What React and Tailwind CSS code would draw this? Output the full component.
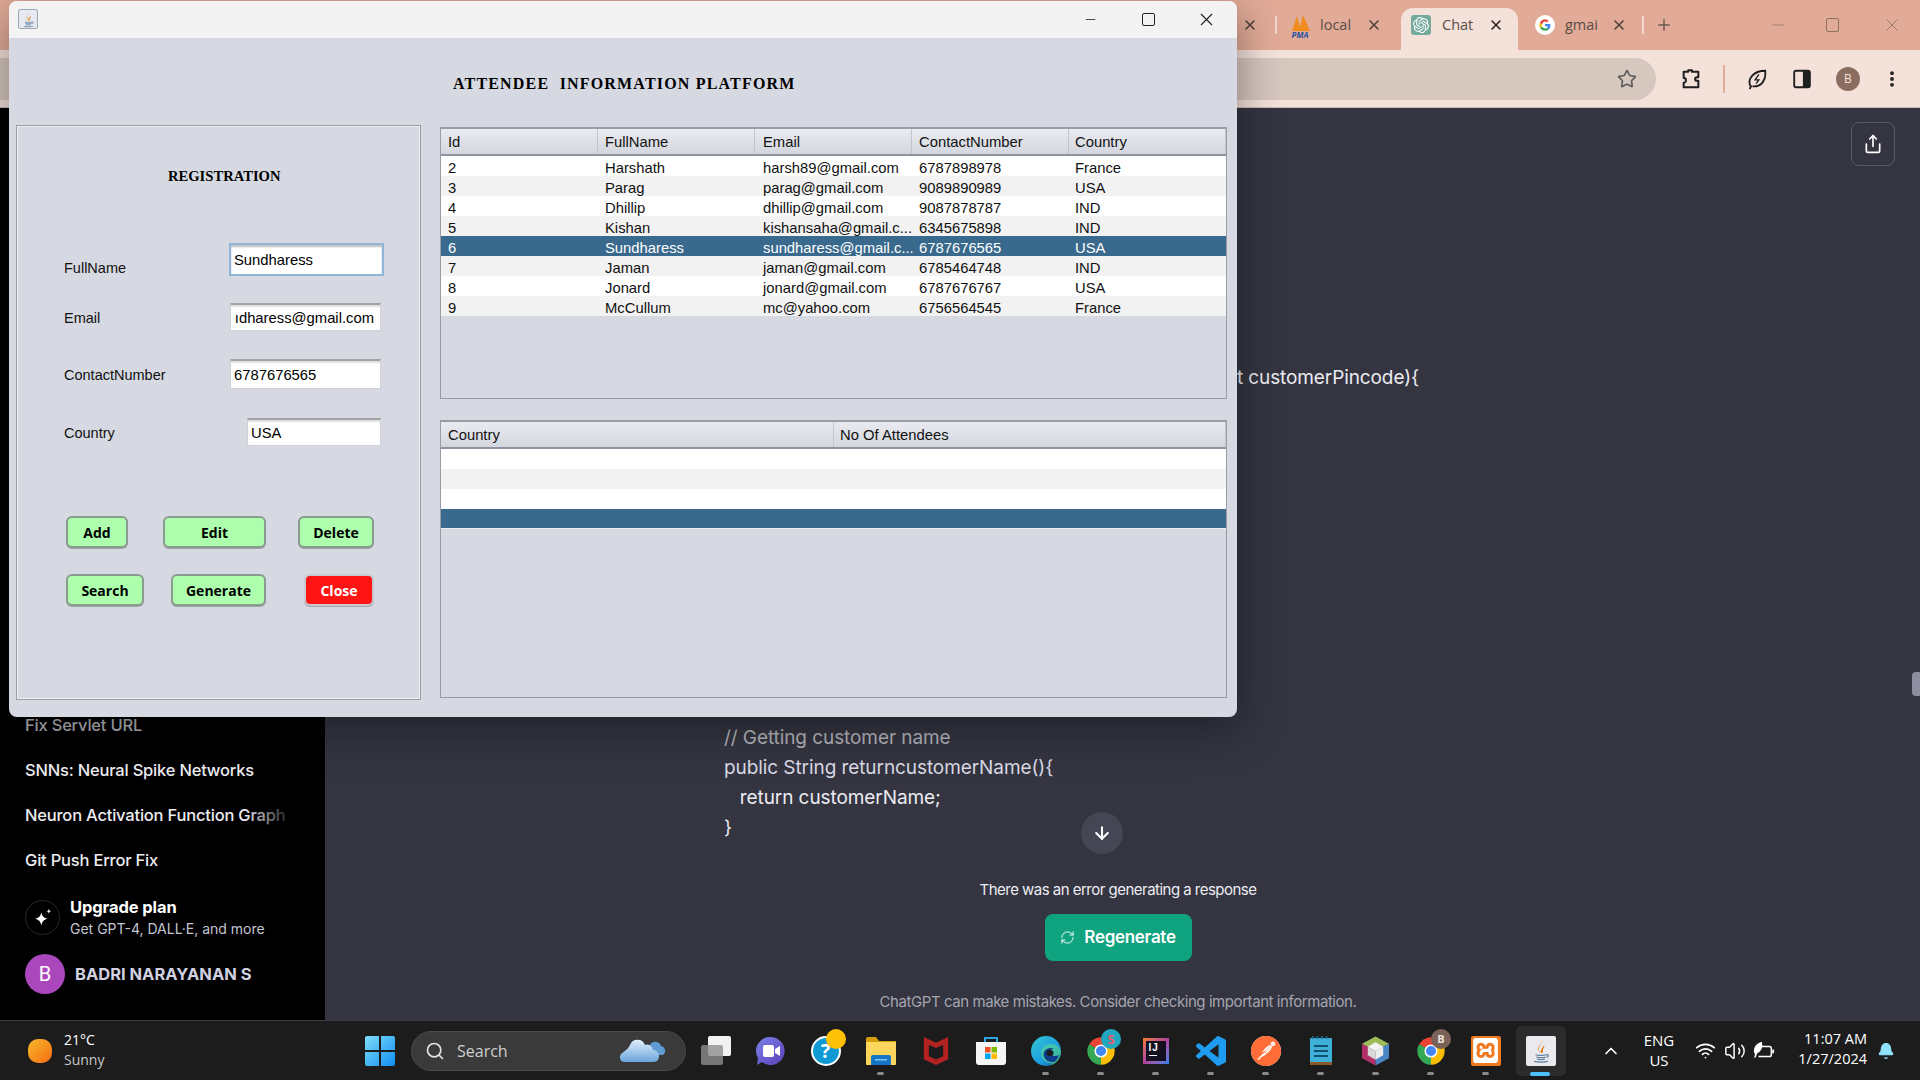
import React from "react";
import { Search, Star, EllipsisVertical, Share, ArrowDown, RefreshCw, X, Plus, Minus, Wifi, Volume2, ChevronUp, Bell } from "lucide-react";
import { SiOpenai, SiMcafee, SiXampp, SiPostman } from "react-icons/si";

const JSANS = { fontFamily: '"Liberation Sans", Arial, sans-serif' };
const UI = { fontFamily: 'Inter, "Noto Sans", sans-serif' };
const WIN = { fontFamily: '"Open Sans", "Noto Sans", sans-serif' };

function JavaGlyph({ className }) {
  return (
    <svg viewBox="0 0 24 24" className={className}>
      <path d="M13 2c1 3-3 5-3 8 0 1.500.8 2.600 1.600 3.400-.3-2 3.400-4 2.600-6.600 1.500 2-2 5-.8 7 0 0-3.700-.3-3.900-3.600C9.300 7 13.500 5.500 13 2z" fill="#e76f00" />
      <path d="M15 8c-2 1.500-2.500 3-1.500 5" fill="none" stroke="#e76f00" strokeWidth="1" />
      <path d="M7 15.500c2 .8 8 .8 10 0M7.500 17.500c2 .7 7 .7 9 0M8.500 19.500c2 .5 5 .5 7 0M5.500 21.500c3 1 10 1 13 0M17 15.500c2-.5 2.500 1.500.2 2.500" fill="none" stroke="#5d7d9c" strokeWidth="1.100" />
    </svg>
  );
}

function ChromeIcon() {
  return (
    <svg viewBox="0 0 48 48" className="w-[30px] h-[30px]">
      <path d="M24 24 L5 13 A22 22 0 0 1 43 13 Z" fill="#ea4335" />
      <path d="M24 24 L43 13 A22 22 0 0 1 24 46 Z" fill="#fbbc04" />
      <path d="M24 24 L24 46 A22 22 0 0 1 5 13 Z" fill="#34a853" />
      <circle cx="24" cy="24" r="10.500" fill="#fff" />
      <circle cx="24" cy="24" r="8" fill="#4285f4" />
    </svg>
  );
}

function GoogleG() {
  return (
    <svg viewBox="0 0 48 48" className="w-[20px] h-[20px]">
      <circle cx="24" cy="24" r="24" fill="#fff" />
      <path d="M37 24.500c0-1-.1-1.800-.3-2.700H24v5h7.300c-.4 2-1.500 3.500-3 4.500l4.700 3.600c2.700-2.500 4-6.200 4-10.400z" fill="#4285f4" />
      <path d="M24 38c3.700 0 6.800-1.200 9-3.300l-4.700-3.600c-1.200.8-2.700 1.300-4.300 1.300-3.300 0-6.200-2.200-7.200-5.300l-4.800 3.700C14.300 35.200 18.800 38 24 38z" fill="#34a853" />
      <path d="M16.800 27.100c-.5-1.400-.5-3 0-4.300l-4.800-3.700c-2 3.900-2 7.800 0 11.700z" fill="#fbbc04" />
      <path d="M24 15.600c1.900 0 3.600.7 5 2l3.700-3.700C30.400 11.700 27.400 10 24 10c-5.200 0-9.700 2.800-12 9.100l4.800 3.700c1-3.100 3.900-7.200 7.200-7.200z" fill="#ea4335" />
    </svg>
  );
}

function TaskItem({ children, dot, badge }) {
  return (
    <div className="relative w-[55px] h-[60px] flex items-center justify-center shrink-0">
      {children}
      {badge}
      {dot && <span className="absolute bottom-[6px] left-[24px] w-[7px] h-[3px] rounded-full bg-[#8a8a8a]" />}
    </div>
  );
}

function Cell({ children, pad }) {
  return <div className={`whitespace-nowrap ${pad}`}>{children}</div>;
}

const rows = [
  ["2", "Harshath", "harsh89@gmail.com", "6787898978", "France"],
  ["3", "Parag", "parag@gmail.com", "9089890989", "USA"],
  ["4", "Dhillip", "dhillip@gmail.com", "9087878787", "IND"],
  ["5", "Kishan", "kishansaha@gmail.c...", "6345675898", "IND"],
  ["6", "Sundharess", "sundharess@gmail.c...", "6787676565", "USA"],
  ["7", "Jaman", "jaman@gmail.com", "6785464748", "IND"],
  ["8", "Jonard", "jonard@gmail.com", "6787676767", "USA"],
  ["9", "McCullum", "mc@yahoo.com", "6756564545", "France"],
];
const pads = ["pl-[7px]", "pl-[7px]", "pl-[8px]", "pl-[7px]", "pl-[6px]"];

const hdr = "h-[25px] flex items-center pt-[2px] bg-gradient-to-b from-[#e9ebf0] via-[#dfe1e7] to-[#d3d6de] border-r border-[#c3c6ce]";

function Field({ w, focus, end, children, h }) {
  return (
    <div className={`${w} ${h} bg-white flex items-center whitespace-nowrap text-[14.800px] text-black pt-[1px] ${end ? "justify-end pr-[6px]" : "pl-[3px]"} ${focus ? "border-2 border-[#8fb5d9] shadow-[inset_0_2px_2px_rgba(0,0,0,0.25)]" : "border border-[#cfd1d6] border-t-2 border-t-[#a3a3a3] shadow-[inset_0_2px_1px_rgba(0,0,0,0.12)]"}`}>
      {children}
    </div>
  );
}

function JBtn({ w, ml, red, children }) {
  return (
    <div
      style={WIN}
      className={`${w} ${ml} h-[32px] rounded-[6px] flex items-center justify-center text-[14px] font-bold border-2 ${red ? "bg-[#ff1414] text-white border-[#c8c8d0]" : "bg-[#adffad] text-black border-[#8a9c90]"} shadow-[0_1px_0_rgba(0,0,0,0.25)]`}
    >
      {children}
    </div>
  );
}

function JavaWindow() {
  return (
    <div className="absolute left-[9px] top-[1px] w-[1228px] h-[716px] rounded-[8px] overflow-hidden bg-[#d6d9e2] shadow-[0_10px_45px_rgba(0,0,0,0.4)] flex flex-col" style={JSANS}>
      <div className="h-[37px] bg-[#f3f3f3] flex items-center shrink-0 pb-[1px]">
        <div className="ml-[9px] w-[20px] h-[20px] rounded-[2px] border border-[#9aa7b5] bg-[#e6eaf0] flex items-center justify-center">
          <JavaGlyph className="w-[17px] h-[17px]" />
        </div>
        <Minus className="ml-[1045px] w-[15px] h-[15px] text-[#222]" strokeWidth={1.3} />
        <div className="ml-[44px] w-[13px] h-[13px] border-[1.5px] border-[#222] rounded-[2px]" />
        <X className="ml-[41px] w-[21px] h-[21px] text-[#222]" strokeWidth={1.3} />
      </div>
      <div className="h-[87px] shrink-0 flex items-start pl-[444px] pt-[37px]">
        <div className="text-[16px] leading-[18px] font-bold text-black tracking-[1.180px] whitespace-pre" style={{ fontFamily: '"Liberation Serif", serif' }}>ATTENDEE  INFORMATION PLATFORM</div>
      </div>
      <div className="flex items-start pl-[7px]">
        <div className="w-[405px] h-[575px] border border-[#9b9da6] shadow-[inset_0_0_0_1px_#eceef2] pl-[47px] shrink-0">
          <div className="mt-[41px] ml-[104px] text-[14.600px] leading-[18px] font-bold text-black" style={{ fontFamily: '"Liberation Serif", serif' }}>REGISTRATION</div>
          <div className="mt-[58px] flex items-start h-[33px] text-[14.500px] ">
            <div className="pt-[16px] w-[165px] leading-[18px] text-[#111]">FullName</div>
            <Field w="w-[155px]" h="h-[33px]" focus>Sundharess</Field>
          </div>
          <div className="mt-[27px] flex items-start h-[28px] text-[14.500px]">
            <div className="pt-[6px] w-[166px] leading-[18px] text-[#111]">Email</div>
            <Field w="w-[151px]" h="h-[28px]" end>ıdharess@gmail.com</Field>
          </div>
          <div className="mt-[28px] flex items-start h-[30px] text-[14.500px]">
            <div className="pt-[7px] w-[166px] leading-[18px] text-[#111]">ContactNumber</div>
            <Field w="w-[151px]" h="h-[30px]">6787676565</Field>
          </div>
          <div className="mt-[29px] flex items-start h-[28px] text-[14.500px]">
            <div className="pt-[6px] w-[183px] leading-[18px] text-[#111]">Country</div>
            <Field w="w-[134px]" h="h-[28px]">USA</Field>
          </div>
          <div className="mt-[70px] flex ml-[2px]">
            <JBtn w="w-[62px]">Add</JBtn>
            <JBtn w="w-[103px]" ml="ml-[35px]">Edit</JBtn>
            <JBtn w="w-[76px]" ml="ml-[32px]">Delete</JBtn>
          </div>
          <div className="mt-[26px] flex ml-[2px]">
            <JBtn w="w-[78px]">Search</JBtn>
            <JBtn w="w-[95px]" ml="ml-[27px]">Generate</JBtn>
            <JBtn w="w-[70px]" ml="ml-[38px]" red>Close</JBtn>
          </div>
        </div>
        <div className="ml-[19px] w-[787px] pt-[2px] shrink-0 text-[14.800px] text-[#111]">
          <div className="h-[272px] border border-[#9b9da6] border-t-2 overflow-hidden">
            <div className="grid grid-cols-[157px_157px_157px_157px_157px] border-b-2 border-[#8f939f]">
              {["Id", "FullName", "Email", "ContactNumber", "Country"].map((t, i) => (
                <div key={t} className={`${hdr} ${pads[i]}`}>{t}</div>
              ))}
            </div>
            {rows.map((r, i) => (
              <div key={r[0]} className={`grid grid-cols-[157px_157px_157px_157px_157px] h-[20px] leading-[24px] ${r[0] === "6" ? "bg-[#39698c] text-white" : i % 2 === 0 ? "bg-white" : "bg-[#f2f2f2]"}`}>
                {r.map((c, j) => (
                  <Cell key={j} pad={pads[j]}>{c}</Cell>
                ))}
              </div>
            ))}
          </div>
          <div className="mt-[21px] h-[278px] border border-[#9b9da6] border-t-2 overflow-hidden">
            <div className="grid grid-cols-[393px_392px] border-b-2 border-[#8f939f]">
              <div className={`${hdr} pl-[7px]`}>Country</div>
              <div className={`${hdr} pl-[6px]`}>No Of Attendees</div>
            </div>
            <div className="h-[20px] bg-white" />
            <div className="h-[20px] bg-[#f2f2f2]" />
            <div className="h-[20px] bg-white" />
            <div className="h-[20px] bg-[#39698c] border-b border-[#eceef2]" />
          </div>
        </div>
      </div>
    </div>
  );
}

function Browser() {
  return (
    <div className="flex flex-col flex-1 min-h-0" style={UI}>
      <div className="h-[50px] bg-[#e2ab98] flex items-center shrink-0 text-[#5a4c47]" style={WIN}>
        <X className="ml-[1242px] w-[16px] h-[16px] text-[#50423d]" strokeWidth={2.4} />
        <div className="ml-[17px] w-[2px] h-[18px] bg-[#f1d9cf]" />
        <div className="ml-[12px] w-[22px] h-[28px] flex flex-col items-center justify-end">
          <svg viewBox="0 0 22 16" className="w-[22px] h-[16px]"><path d="M3 16 L8 1 L11 12 L14 0 L21 16 Z" fill="#f08d1e" /></svg>
          <span className="text-[8px] leading-[8px] font-bold italic text-[#2a4f9e]">PMA</span>
        </div>
        <div className="ml-[9px] w-[33px] text-[14.500px] whitespace-nowrap">local</div>
        <X className="ml-[13px] w-[16px] h-[16px] text-[#50423d]" strokeWidth={2.4} />
        <div className="ml-[19px] w-[117px] h-[42px] self-end bg-[#f4e1da] rounded-t-[12px] flex items-center pb-[8px]">
          <div className="ml-[10px] w-[20px] h-[20px] rounded-[3px] bg-[#74aa9c] flex items-center justify-center"><SiOpenai className="w-[16px] h-[16px] text-white" /></div>
          <div className="ml-[11px] w-[35px] text-[14.500px] whitespace-nowrap">Chat</div>
          <X className="ml-[11px] w-[16px] h-[16px] text-[#2c2422]" strokeWidth={2.4} />
        </div>
        <div className="ml-[17px]"><GoogleG /></div>
        <div className="ml-[10px] w-[33px] text-[14.500px] whitespace-nowrap">gmai</div>
        <X className="ml-[13px] w-[16px] h-[16px] text-[#50423d]" strokeWidth={2.4} />
        <div className="ml-[15px] w-[2px] h-[18px] bg-[#f1d9cf]" />
        <Plus className="ml-[11px] w-[18px] h-[18px] text-[#6a5a54]" strokeWidth={2} />
        <Minus className="ml-[96px] w-[18px] h-[18px] text-[#8c7066]" strokeWidth={1} />
        <div className="ml-[39px] w-[13px] h-[14px] border border-[#8c7066] rounded-[2px]" />
        <X className="ml-[43px] w-[20px] h-[20px] text-[#8c7066]" strokeWidth={1} />
      </div>
      <div className="h-[58px] bg-[#f4e1da] flex items-center shrink-0 border-b border-[#cdb9b1]">
        <div className="w-[1656px] h-[42px] rounded-r-full bg-[#d6c7bf] flex items-center justify-end pr-[19px] shrink-0">
          <Star className="w-[20px] h-[20px] text-[#5f5f5f]" strokeWidth={2} />
        </div>
        <svg viewBox="0 0 24 24" className="ml-[24px] w-[22px] h-[22px]" fill="none" stroke="#1f1f1f" strokeWidth="2.200"><path d="M4 4h5V2.500h4V4h7v6h-1.500a2 2 0 0 0 0 4H20v7H4v-5a2.500 2.500 0 0 0 0-5z" strokeLinejoin="round" /></svg>
        <div className="ml-[21px] w-[2px] h-[28px] bg-[#e2ab98]" />
        <svg viewBox="0 0 24 24" className="ml-[21px] w-[22px] h-[22px]" fill="none" stroke="#1f1f1f" strokeWidth="2"><path d="M5 20C1 12 8 3 21 3c1 10-4 18-14 17M4 23l2-4" /><path d="M14 7l-4 6h4l-3 4" strokeWidth="1.500" /></svg>
        <svg viewBox="0 0 24 24" className="ml-[23px] w-[22px] h-[22px]"><rect x="3.500" y="3" width="17" height="18" rx="2" fill="none" stroke="#1f1f1f" strokeWidth="2" /><rect x="13" y="3" width="8" height="18" rx="1" fill="#1f1f1f" /></svg>
        <div className="ml-[23px] w-[24px] h-[24px] rounded-full bg-[#8a6d60] text-[#f4e1da] text-[12px] flex items-center justify-center" style={WIN}>B</div>
        <EllipsisVertical className="ml-[22px] w-[20px] h-[20px] text-[#1f1f1f]" strokeWidth={2.6} />
      </div>
      <div className="flex flex-1 min-h-0">
        <aside className="w-[325px] bg-black flex flex-col justify-end pb-[26px] pl-[25px] shrink-0 text-[#ececf1] relative">
          {["Fix Servlet URL", "SNNs: Neural Spike Networks", "Neuron Activation Function Graph", "Git Push Error Fix"].map((t, i) => (
            <div key={t} className={`h-[45px] flex items-center text-[16.500px] font-medium tracking-[-0.2px] whitespace-nowrap w-[265px] ${i === 0 ? "text-[#b5b5bb]" : ""}`}>{t}</div>
          ))}
          <div className="absolute left-[245px] top-[690px] w-[50px] h-[30px] bg-gradient-to-r from-transparent to-black" />
          <div className="mt-[17px] h-[35px] flex items-center">
            <div className="w-[35px] h-[35px] rounded-full border border-[#2a2a2a] flex items-center justify-center">
              <svg viewBox="0 0 24 24" className="w-[20px] h-[20px]" fill="#fff"><path d="M10 5c1 5 3 7 8 8-5 1-7 3-8 8-1-5-3-7-8-8 5-1 7-3 8-8z" /><path d="M19 1c.4 2 1 2.600 3 3-2 .4-2.600 1-3 3-.4-2-1-2.600-3-3 2-.4 2.600-1 3-3z" /></svg>
            </div>
            <div className="ml-[10px]">
              <div className="text-[16.500px] leading-[20px] font-bold text-white tracking-[-0.1px]">Upgrade plan</div>
              <div className="text-[14px] leading-[20px] mt-[2px] text-[#c5c5d2]">Get GPT-4, DALL·E, and more</div>
            </div>
          </div>
          <div className="mt-[19px] h-[40px] flex items-center">
            <div className="w-[40px] h-[40px] rounded-full bg-[#ab47bc] text-white flex items-center justify-center text-[20px]" style={{ fontFamily: "Roboto, sans-serif" }}>B</div>
            <div className="ml-[10px] text-[16.500px] font-bold text-[#d1d1e0] whitespace-nowrap">BADRI NARAYANAN S</div>
          </div>
        </aside>
        <main className="flex-1 bg-[#343541] relative flex flex-col text-[#d1d5db]">
          <div className="flex justify-end pt-[14px] pr-[25px]">
            <div className="w-[44px] h-[44px] rounded-[8px] border border-[#565869] flex items-center justify-center">
              <Share className="w-[20px] h-[20px] text-white" strokeWidth={2} />
            </div>
          </div>
          <div className="mt-[197px] ml-[400px] w-[694px] flex justify-end whitespace-nowrap text-[19px] leading-[30px] text-[#ececf1] tracking-[-0.1px]">
            <span>public Customer(String customerName, int customerId, int customerPincode){"{"}</span>
          </div>
          <div className="mt-[330px] ml-[399px] text-[19px] leading-[30px] tracking-[-0.08px] whitespace-pre">
            <div className="text-[#b4b5bd]">// Getting customer name</div>
            <div className="text-[#d9d9e3]">public String returncustomerName(){"{"}</div>
            <div className="text-[#ececf1]">{"   "}return customerName;</div>
            <div className="text-[#ececf1]">{"}"}</div>
          </div>
          <div className="absolute left-[756px] top-[704px] w-[42px] h-[42px] rounded-full bg-[#444654] flex items-center justify-center">
            <ArrowDown className="w-[20px] h-[20px] text-white" strokeWidth={2.5} />
          </div>
          <div className="w-[1586px] flex flex-col items-center">
            <div className="mt-[37px] h-[20px] text-[15px] leading-[20px] text-[#ececf1] tracking-[-0.52px]">There was an error generating a response</div>
            <div className="mt-[14px] w-[147px] h-[47px] rounded-[8px] bg-[#10a37f] flex items-center justify-center text-white font-semibold text-[17px] tracking-[-0.3px]">
              <RefreshCw className="w-[15px] h-[15px] mr-[9px]" strokeWidth={1.5} />Regenerate
            </div>
            <div className="mt-[31px] h-[20px] text-[15px] leading-[20px] text-[#a4a5af] tracking-[-0.43px]">ChatGPT can make mistakes. Consider checking important information.</div>
          </div>
          <div className="absolute right-[0px] top-[564px] w-[8px] h-[24px] rounded-l-[4px] bg-[#8e8ea0]" />
        </main>
      </div>
    </div>
  );
}

function Taskbar() {
  return (
    <div className="h-[60px] bg-[#1c1c1c] border-t border-[#3a3a3a] flex items-center shrink-0 text-white" style={WIN}>
      <div className="w-[350px] flex items-center pl-[28px] shrink-0">
        <div className="w-[24px] h-[24px] rounded-[10px] bg-gradient-to-br from-[#f6b72c] to-[#f26b10]" />
        <div className="ml-[12px] pb-[2px]">
          <div className="text-[14px] leading-[20px]">21°C</div>
          <div className="text-[14px] leading-[20px] text-[#c9c9c9]">Sunny</div>
        </div>
      </div>
      <svg viewBox="0 0 30 30" className="ml-[15px] w-[30px] h-[30px] shrink-0">
        <defs><linearGradient id="w" x1="0" y1="0" x2="1" y2="1"><stop offset="0" stopColor="#7fdcfb" /><stop offset="1" stopColor="#0f8ff0" /></linearGradient></defs>
        <path d="M0 2a2 2 0 0 1 2-2h12v14H0zM16 0h12a2 2 0 0 1 2 2v12H16zM0 16h14v14H2a2 2 0 0 1-2-2zM16 16h14v12a2 2 0 0 1-2 2H16z" fill="url(#w)" />
      </svg>
      <div className="ml-[16px] w-[275px] h-[40px] rounded-full bg-[#3a3a3a] border border-[#4a4a4a] flex items-center shrink-0">
        <Search className="ml-[13px] w-[20px] h-[20px] text-[#e2e2e2]" strokeWidth={2} />
        <span className="ml-[12px] text-[16px] text-[#cfcfcf]">Search</span>
        <svg viewBox="0 0 46 24" className="ml-[112px] w-[46px] h-[24px]">
          <defs><linearGradient id="c" x1="0" y1="0" x2="0" y2="1"><stop offset="0" stopColor="#e2f0fb" /><stop offset="1" stopColor="#6aa5dc" /></linearGradient></defs>
          <path d="M30 6a6 6 0 0 1 11 1 5 5 0 0 1 2 9H30z" fill="#5f9ad2" />
          <path d="M4 23a5 5 0 0 1-1-9.500C6 11 8 10 10 6a8 8 0 0 1 15 0 6 6 0 0 1 8 5 6 6 0 0 1 6 6 6 6 0 0 1-5 6z" fill="url(#c)" />
        </svg>
      </div>
      <div className="ml-[2px] flex items-center">
        <TaskItem>
          <div className="relative w-[30px] h-[29px]">
            <div className="absolute left-[7px] top-0 w-[23px] h-[20px] rounded-[2px] bg-[#f2f2f2]" />
            <div className="absolute left-0 bottom-0 w-[22px] h-[20px] rounded-[2px] bg-[#8d8d8d]/80" />
          </div>
        </TaskItem>
        <TaskItem>
          <svg viewBox="0 0 30 30" className="w-[30px] h-[30px]">
            <defs><linearGradient id="t" x1="0" y1="0" x2="1" y2="1"><stop offset="0" stopColor="#7b83eb" /><stop offset="1" stopColor="#5b3fb5" /></linearGradient></defs>
            <path d="M15 1a14 14 0 1 1-9 25l-5 3 1-7A14 14 0 0 1 15 1z" fill="url(#t)" />
            <rect x="7" y="9" width="11" height="12" rx="2" fill="#fff" /><path d="M19 13l5-3v10l-5-3z" fill="#fff" />
          </svg>
        </TaskItem>
        <TaskItem badge={<span className="absolute left-[28px] top-[8px] w-[20px] h-[20px] rounded-full bg-[#ffc107]" />}>
          <div className="w-[30px] h-[30px] rounded-full bg-[#0f9ad6] border-2 border-white flex items-center justify-center text-[20px] font-bold text-white">?</div>
        </TaskItem>
        <TaskItem dot>
          <svg viewBox="0 0 30 30" className="w-[30px] h-[30px]">
            <path d="M0 3a2 2 0 0 1 2-2h8l3 4h17v6H0z" fill="#d69e0b" />
            <path d="M0 6h30v22a1 1 0 0 1-1 1H1a1 1 0 0 1-1-1z" fill="#fcd65c" />
            <path d="M5 21a2 2 0 0 1 2-2h16a2 2 0 0 1 2 2v8H5z" fill="#1576c8" /><rect x="9" y="23" width="12" height="1.500" fill="#7cc4f2" />
          </svg>
        </TaskItem>
        <TaskItem><SiMcafee className="w-[28px] h-[30px] text-[#b32322]" /></TaskItem>
        <TaskItem>
          <svg viewBox="0 0 30 30" className="w-[30px] h-[30px]">
            <path d="M9 6V2h12v4" fill="none" stroke="#2aa7e0" strokeWidth="2" />
            <path d="M0 6h30v20a3 3 0 0 1-3 3H3a3 3 0 0 1-3-3z" fill="#f5f5f5" />
            <rect x="9" y="11" width="5.500" height="5.500" fill="#f25022" /><rect x="15.500" y="11" width="5.500" height="5.500" fill="#7fba00" /><rect x="9" y="17.500" width="5.500" height="5.500" fill="#00a4ef" /><rect x="15.500" y="17.500" width="5.500" height="5.500" fill="#ffb900" />
          </svg>
        </TaskItem>
        <TaskItem dot>
          <svg viewBox="0 0 30 30" className="w-[30px] h-[30px]">
            <defs><linearGradient id="e" x1="0" y1="0" x2="1" y2="1"><stop offset="0" stopColor="#37c6d0" /><stop offset="0.6" stopColor="#1b9de2" /><stop offset="1" stopColor="#0c59a4" /></linearGradient></defs>
            <circle cx="15" cy="15" r="15" fill="url(#e)" />
            <path d="M30 16c0-5-5-8-10-8-6 0-10 4-10 9 0 6 5 11 12 10l-3 2c5 0 11-6 11-13z" fill="#5ee07d" opacity="0.55" />
            <path d="M28 19c-3 2-9 1-9-3 0-2 2-3 4-3-3-2-8-1-10 3-2 5 3 11 10 10 2-1 4-4 5-7z" fill="#0f3f8a" />
            <ellipse cx="19" cy="17" rx="3.500" ry="3" fill="#1c1c1c" />
          </svg>
        </TaskItem>
        <TaskItem dot badge={<span className="absolute left-[28px] top-[8px] w-[20px] h-[20px] rounded-full bg-[#1fa7bf] text-[#ef5a6a] text-[13px] font-bold leading-[20px] text-center">S</span>}><ChromeIcon /></TaskItem>
        <TaskItem dot>
          <div className="w-[26px] h-[26px] bg-gradient-to-br from-[#f97a12] via-[#b0409d] to-[#0f7fe8] p-[3px]">
            <div className="w-full h-full bg-[#14101f] flex flex-col pl-[3px] text-white leading-[11px]" style={JSANS}>
              <span className="text-[10px] font-bold tracking-[1px] mt-[1px]">IJ</span>
              <span className="w-[8px] h-[1.5px] bg-white mt-[2px]" />
            </div>
          </div>
        </TaskItem>
        <TaskItem dot>
          <svg viewBox="0 0 24 24" className="w-[30px] h-[30px]"><path d="M23.150 2.587L18.210.21a1.494 1.494 0 0 0-1.705.29l-9.460 8.630-4.120-3.128a.999.999 0 0 0-1.276.057L.327 7.261A1 1 0 0 0 .326 8.740L3.899 12 .326 15.260a1 1 0 0 0 .001 1.479L1.650 17.940a.999.999 0 0 0 1.276.057l4.120-3.128 9.460 8.630a1.492 1.492 0 0 0 1.704.29l4.942-2.377A1.500 1.500 0 0 0 24 20.060V3.939a1.500 1.500 0 0 0-.850-1.352zm-5.146 14.861L10.826 12l7.178-5.448v10.896z" fill="#1f9cf0" /></svg>
        </TaskItem>
        <TaskItem dot>
          <div className="relative w-[30px] h-[30px] rounded-full bg-white"><SiPostman className="w-[30px] h-[30px] text-[#ff6c37]" /></div>
        </TaskItem>
        <TaskItem dot>
          <svg viewBox="0 0 22 30" className="w-[22px] h-[30px]">
            <rect x="0" y="2" width="22" height="26" rx="1" fill="#3fb0d8" /><rect x="0" y="26" width="22" height="3" fill="#8a5a2b" />
            <path d="M3 0v3M7.500 0v3M12 0v3M16.500 0v3" stroke="#1a6f96" strokeWidth="1.600" />
            <path d="M4 10h14M4 15h14M4 20h14" stroke="#10526f" strokeWidth="2" />
          </svg>
        </TaskItem>
        <TaskItem dot>
          <svg viewBox="0 0 28 30" className="w-[27px] h-[30px]">
            <path d="M14 0l14 7.500L14 15 0 7.500z" fill="#9dbb5b" /><path d="M0 7.500L14 15v15L0 22.500z" fill="#b22f67" /><path d="M28 7.500L14 15v15l14-7.500z" fill="#4a84c4" />
            <path d="M14 6l8 4.500-8 4.500-8-4.500z" fill="#f4f4f4" /><path d="M6 10.500l8 4.500v9l-8-4.500z" fill="#d8d8d8" /><path d="M22 10.500l-8 4.500v9l8-4.500z" fill="#ececec" />
          </svg>
        </TaskItem>
        <TaskItem dot badge={<span className="absolute left-[28px] top-[8px] w-[20px] h-[20px] rounded-full bg-[#7a6258] text-[#efe3dd] text-[11px] font-bold leading-[20px] text-center">B</span>}><ChromeIcon /></TaskItem>
        <TaskItem dot>
          <div className="w-[30px] h-[30px] rounded-[2px] bg-[#f0791f] flex items-center justify-center"><SiXampp className="w-[25px] h-[25px] text-white" /></div>
        </TaskItem>
        <div className="relative w-[55px] h-[60px] flex items-center justify-center shrink-0">
          <div className="w-[50px] h-[50px] rounded-[5px] bg-[#2b2b2b] flex items-center justify-center">
            <div className="w-[30px] h-[30px] rounded-[2px] bg-[#e9e9ee] flex items-center justify-center"><JavaGlyph className="w-[26px] h-[26px]" /></div>
          </div>
          <span className="absolute bottom-[5px] left-[17px] w-[20px] h-[4px] rounded-full bg-[#4cc2ff]" />
        </div>
      </div>
      <ChevronUp className="ml-[33px] w-[20px] h-[20px] text-white shrink-0" strokeWidth={2} />
      <div className="ml-[18px] w-[40px] text-center text-[15px] leading-[20px] pb-[2px]">
        <div>ENG</div><div>US</div>
      </div>
      <Wifi className="ml-[16px] w-[21px] h-[21px]" strokeWidth={2} />
      <Volume2 className="ml-[8px] w-[22px] h-[22px]" strokeWidth={1.6} />
      <svg viewBox="0 0 24 24" className="ml-[7px] w-[22px] h-[22px]" fill="none" stroke="#fff" strokeWidth="1.600">
        <path d="M7 7h11a2 2 0 0 1 2 2v7a2 2 0 0 1-2 2H6" /><path d="M22 10.500v4" strokeWidth="2" /><path d="M2 14C1 9 4 5 9 3c1 5-1 9-5 11L2 19" fill="#fff" />
      </svg>
      <div className="ml-[1px] w-[91px] text-right text-[14.500px] leading-[20px] whitespace-nowrap pb-[3px]">
        <div>11:07 AM</div><div>1/27/2024</div>
      </div>
      <Bell className="ml-[10px] w-[18px] h-[20px] text-[#8fe3ff]" fill="#8fe3ff" strokeWidth={1.5} />
    </div>
  );
}

export default function App() {
  return (
    <div className="relative w-[1920px] h-[1080px] overflow-hidden flex flex-col bg-[#343541]">
      <Browser />
      <Taskbar />
      <JavaWindow />
    </div>
  );
}
